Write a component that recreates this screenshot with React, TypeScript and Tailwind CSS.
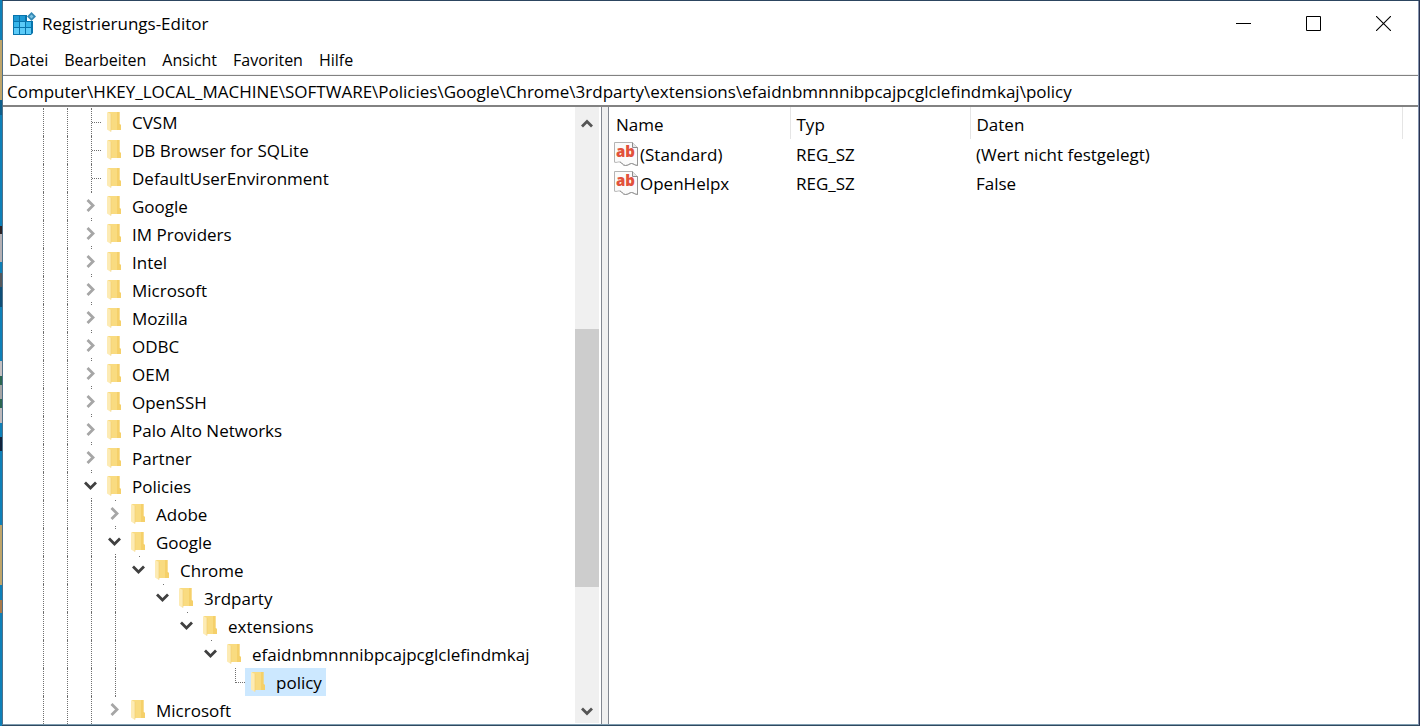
type Mark = 'leaf' | 'last' | 'closed' | 'open';

type Key = {
  label: string;
  depth: number;
  mark: Mark;
  end?: boolean;
  selected?: boolean;
};

const keys: Key[] = [
  { label: 'CVSM', depth: 2, mark: 'leaf' },
  { label: 'DB Browser for SQLite', depth: 2, mark: 'leaf' },
  { label: 'DefaultUserEnvironment', depth: 2, mark: 'leaf' },
  { label: 'Google', depth: 2, mark: 'closed' },
  { label: 'IM Providers', depth: 2, mark: 'closed' },
  { label: 'Intel', depth: 2, mark: 'closed' },
  { label: 'Microsoft', depth: 2, mark: 'closed' },
  { label: 'Mozilla', depth: 2, mark: 'closed' },
  { label: 'ODBC', depth: 2, mark: 'closed' },
  { label: 'OEM', depth: 2, mark: 'closed' },
  { label: 'OpenSSH', depth: 2, mark: 'closed' },
  { label: 'Palo Alto Networks', depth: 2, mark: 'closed' },
  { label: 'Partner', depth: 2, mark: 'closed' },
  { label: 'Policies', depth: 2, mark: 'open' },
  { label: 'Adobe', depth: 3, mark: 'closed' },
  { label: 'Google', depth: 3, mark: 'open' },
  { label: 'Chrome', depth: 4, mark: 'open', end: true },
  { label: '3rdparty', depth: 5, mark: 'open', end: true },
  { label: 'extensions', depth: 6, mark: 'open', end: true },
  { label: 'efaidnbmnnnibpcajpcglclefindmkaj', depth: 7, mark: 'open', end: true },
  { label: 'policy', depth: 8, mark: 'last', selected: true },
  { label: 'Microsoft', depth: 3, mark: 'closed', end: true },
];

const values = [
  { name: '(Standard)', type: 'REG_SZ', data: '(Wert nicht festgelegt)' },
  { name: 'OpenHelpx', type: 'REG_SZ', data: 'False' },
];

const menus = ['Datei', 'Bearbeiten', 'Ansicht', 'Favoriten', 'Hilfe'];

// Desktop showing left of the window, top to bottom
const desktop = [
  'grow-[40] bg-[#0d80b8]',
  'grow-[60] bg-[#bfa56a]',
  'grow-[15] bg-[#0d5f8c]',
  'grow-[111] bg-[#0d80b8]',
  'grow-[8] bg-[#2b2326]',
  'grow-[28] bg-[#b4b0b4]',
  'grow-[11] bg-[#0d80b8]',
  'grow-[14] bg-[#55585c]',
  'grow-[20] bg-[#0e4f78]',
  'grow-[54] bg-[#0d80b8]',
  'grow-[15] bg-[#c4c0c2]',
  'grow-[9] bg-[#2b6650]',
  'grow-[14] bg-[#a5a5a5]',
  'grow-[9] bg-[#2b6650]',
  'grow-[15] bg-[#bdb9bc]',
  'grow-[14] bg-[#0d80b8]',
  'grow-[14] bg-[#10233c]',
  'grow-[74] bg-[#0d80b8]',
  'grow-[60] bg-[#bfa56a]',
  'grow-[15] bg-[#0d80b8]',
  'grow-[13] bg-[#a8794a]',
  'grow-[113] bg-[#0d80b8]',
];

// Levels from here on have no further siblings, so no guide line
const LAST_GUIDE = 4;

function AppIcon() {
  return (
    <svg width="24" height="24" viewBox="0 0 24 24" className="shrink-0" aria-hidden="true">
      <path d="M1 3h14v6h6v12l-2 2H1z" fill="#0874ac" />
      <path d="M2 4h5v5H2zM8 4h5v5H8z" fill="#1f9ad4" />
      <path d="M2 10h5v5H2zM14 10h5v5h-5z" fill="#38b6ea" />
      <path d="M8 10h5v5H8zM2 16h5v6H2zM8 16h5v6H8zM14 16h5v6h-5z" fill="#5ccbf8" />
      <path d="M19.500 0l4.500 4.500L19.500 9 15 4.500z" fill="#3388b4" />
      <path d="M19.500 2.500l2 2-2 2-2-2z" fill="#7cc4e4" />
    </svg>
  );
}

function FolderIcon() {
  return (
    <svg width="14" height="20" viewBox="0 0 14 20" className="shrink-0" aria-hidden="true">
      <path d="M1 0h11.500v12l1.500 1v5H3z" fill="#f9db80" />
      <path d="M10 0h2.500v12l1.500 1v5h-4z" fill="#f5d06a" />
      <path d="M0 0l4 2v18L0 17.500z" fill="#fdebb4" />
      <path d="M4 2v17.500" stroke="#f0cd70" strokeWidth="0.600" />
    </svg>
  );
}

function StringIcon() {
  return (
    <svg width="24" height="24" viewBox="0 0 24 24" className="shrink-0" aria-hidden="true">
      <path
        d="M.5.500h18l5 5v18c-3-.2-4-2-6-2s-3 2-6 2-3.500-3-5.500-3.500-3 1-5.500.2z"
        fill="#fbfbfb"
        stroke="#b4b4b4"
      />
      <path d="M23.500 5.500v18c-3-.2-4-2-6-2s-3 2-6 2-3.500-3-5.500-3.500" fill="none" stroke="#959595" />
      <path d="M18.500.500v5h5" fill="#e8e8e8" stroke="#8c8c8c" />
      <text
        x="2"
        y="15"
        fontSize="15"
        fontWeight="800"
        fill="#e2523c"
        fontFamily="Open Sans, sans-serif"
      >
        ab
      </text>
    </svg>
  );
}

function Guide() {
  return (
    <div className="w-6 shrink-0 pl-[14px]">
      <div className="h-7 border-l border-dotted border-[#707070]" />
    </div>
  );
}

function Branch({ mark, end, label }: { mark: Mark; end?: boolean; label: string }) {
  if (mark === 'leaf') {
    return (
      <div className="w-6 shrink-0 pl-[14px]">
        <div className="h-7 border-l border-dotted border-[#707070]">
          <div className="h-[15px] border-b border-dotted border-[#707070]" />
        </div>
      </div>
    );
  }
  if (mark === 'last') {
    return (
      <div className="w-6 shrink-0 pl-[14px]">
        <div className="h-[15px] border-b border-l border-dotted border-[#707070]" />
      </div>
    );
  }
  return (
    <div className="flex w-6 shrink-0 flex-col">
      <div className="ml-[14px] h-px w-px bg-[#707070]" />
      <button
        type="button"
        aria-label={mark === 'open' ? `${label} reduzieren` : `${label} erweitern`}
        className="flex h-[25px] w-[27px] items-center justify-center"
      >
        {mark === 'open' ? (
          <svg width="13" height="9" viewBox="0 0 13 9">
            <path d="M1 1.500L6.500 7 12 1.500" fill="none" stroke="#404040" strokeWidth="2.800" />
          </svg>
        ) : (
          <svg width="9" height="13" viewBox="0 0 9 13">
            <path d="M1.500 1L7 6.500 1.500 12" fill="none" stroke="#a6a6a6" strokeWidth="2.800" />
          </svg>
        )}
      </button>
      {!end && <div className="ml-[14px] h-px w-px bg-[#707070]" />}
    </div>
  );
}

function TreeRow({ item }: { item: Key }) {
  const levels = Array.from({ length: item.depth }, (_, i) => i);
  return (
    <li
      role="treeitem"
      aria-level={item.depth + 1}
      aria-selected={!!item.selected}
      className="flex h-7"
    >
      {levels.map((i) =>
        i < LAST_GUIDE ? <Guide key={i} /> : <div key={i} className="w-6 shrink-0" />
      )}
      <Branch mark={item.mark} end={item.end} label={item.label} />
      <button
        type="button"
        className={`flex items-center gap-[11px] pr-1 pl-1.5 whitespace-nowrap ${
          item.selected ? 'bg-[#cce8ff]' : ''
        }`}
      >
        <FolderIcon />
        <span className="pt-0.5">{item.label}</span>
      </button>
    </li>
  );
}

function ScrollBar() {
  return (
    <div className="mr-0.5 mb-px flex w-6 shrink-0 flex-col bg-[#f0f0f0]">
      <button type="button" aria-label="Nach oben" className="flex h-8 items-center justify-center">
        <svg width="12" height="9" viewBox="0 0 12 9">
          <path d="M1 7.500L6 2.500l5 5" fill="none" stroke="#555" strokeWidth="2.800" />
        </svg>
      </button>
      <div className="grow-[190]" />
      <div className="grow-[257] bg-[#cdcdcd]" />
      <div className="grow-[104]" />
      <button type="button" aria-label="Nach unten" className="flex h-8 items-center justify-center pt-2">
        <svg width="12" height="9" viewBox="0 0 12 9">
          <path d="M1 1.500l5 5 5-5" fill="none" stroke="#555" strokeWidth="2.800" />
        </svg>
      </button>
    </div>
  );
}

function WindowControls() {
  return (
    <>
      <button type="button" aria-label="Minimieren" className="flex h-11 w-[70px] items-center justify-center">
        <svg width="15" height="15" viewBox="0 0 15 15">
          <path d="M0 7.500h15" stroke="#000" />
        </svg>
      </button>
      <button type="button" aria-label="Maximieren" className="flex h-11 w-[70px] items-center justify-center">
        <svg width="15" height="15" viewBox="0 0 15 15">
          <path d="M.5.500h14v14H.5z" fill="none" stroke="#000" />
        </svg>
      </button>
      <button type="button" aria-label="Schließen" className="flex h-11 w-[70px] items-center justify-center">
        <svg width="15" height="15" viewBox="0 0 15 15">
          <path d="M0 0l15 15M15 0L0 15" stroke="#000" strokeWidth="1.100" />
        </svg>
      </button>
    </>
  );
}

function ValueTable() {
  return (
    <table className="w-full table-fixed border-collapse text-left">
      <colgroup>
        <col className="w-[181px]" />
        <col className="w-[180px]" />
        <col />
        <col className="w-4" />
      </colgroup>
      <thead>
        <tr className="h-8">
          <th className="border-r border-[#e5e5e5] pt-1 pl-[7px] font-normal">Name</th>
          <th className="border-r border-[#e5e5e5] pt-1 pl-1.5 font-normal">Typ</th>
          <th className="border-r border-[#e5e5e5] pt-1 pl-1.5 font-normal">Daten</th>
          <td />
        </tr>
      </thead>
      <tbody>
        {values.map((v) => (
          <tr key={v.name} className="h-[29px]">
            <td className="pl-[5px]">
              <div className="flex items-center gap-0.5">
                <StringIcon />
                <span className="pt-0.5">{v.name}</span>
              </div>
            </td>
            <td className="pt-0.5 pl-1.5">{v.type}</td>
            <td className="pt-0.5 pl-1.5">{v.data}</td>
            <td />
          </tr>
        ))}
      </tbody>
    </table>
  );
}

export default function App() {
  return (
    <div className="flex h-screen font-['Open_Sans',sans-serif] text-[17px] leading-6 text-black">
      <div className="flex w-0.5 shrink-0 flex-col">
        {desktop.map((c, i) => (
          <div key={i} className={c} />
        ))}
      </div>

      <div className="flex min-w-0 flex-1 border-t border-r border-b border-t-[#2c4560] border-r-[#2a3350] border-b-[#2f4a60]">
        <div className="flex min-w-0 flex-1 flex-col border-r border-b border-l border-r-[#8494ae] border-b-[#7f9db0] border-l-[#4f7088] bg-white">
          {/* Title bar */}
          <header className="flex h-[45px] shrink-0 items-center pl-[9px]">
            <AppIcon />
            <h1 className="flex-1 pl-1.5">Registrierungs-Editor</h1>
            <WindowControls />
          </header>

          <nav className="flex h-[29px] shrink-0 items-center gap-4 border-b border-[#f0f0f0] pl-1.5 text-[16px]">
            {menus.map((m) => (
              <button key={m} type="button">
                {m}
              </button>
            ))}
          </nav>

          <input
            type="text"
            aria-label="Adresse"
            className="h-8 shrink-0 border-t border-b-2 border-[#828282] px-1 pt-0.5 outline-none"
            defaultValue="Computer\HKEY_LOCAL_MACHINE\SOFTWARE\Policies\Google\Chrome\3rdparty\extensions\efaidnbmnnnibpcajpcglclefindmkaj\policy"
          />

          <main className="flex min-h-0 flex-1">
            <section className="flex w-[599px] shrink-0 border-r border-[#828790]">
              <ul role="tree" aria-label="Schlüssel" className="min-w-0 flex-1 overflow-hidden pt-px pl-[26px]">
                {keys.map((k, i) => (
                  <TreeRow key={i} item={k} />
                ))}
              </ul>
              <ScrollBar />
            </section>
            <div className="w-1.5 shrink-0 bg-[#f0f0f0]" />
            <section className="min-w-0 flex-1 border-l border-[#828790]">
              <ValueTable />
            </section>
          </main>
        </div>
      </div>
    </div>
  );
}
